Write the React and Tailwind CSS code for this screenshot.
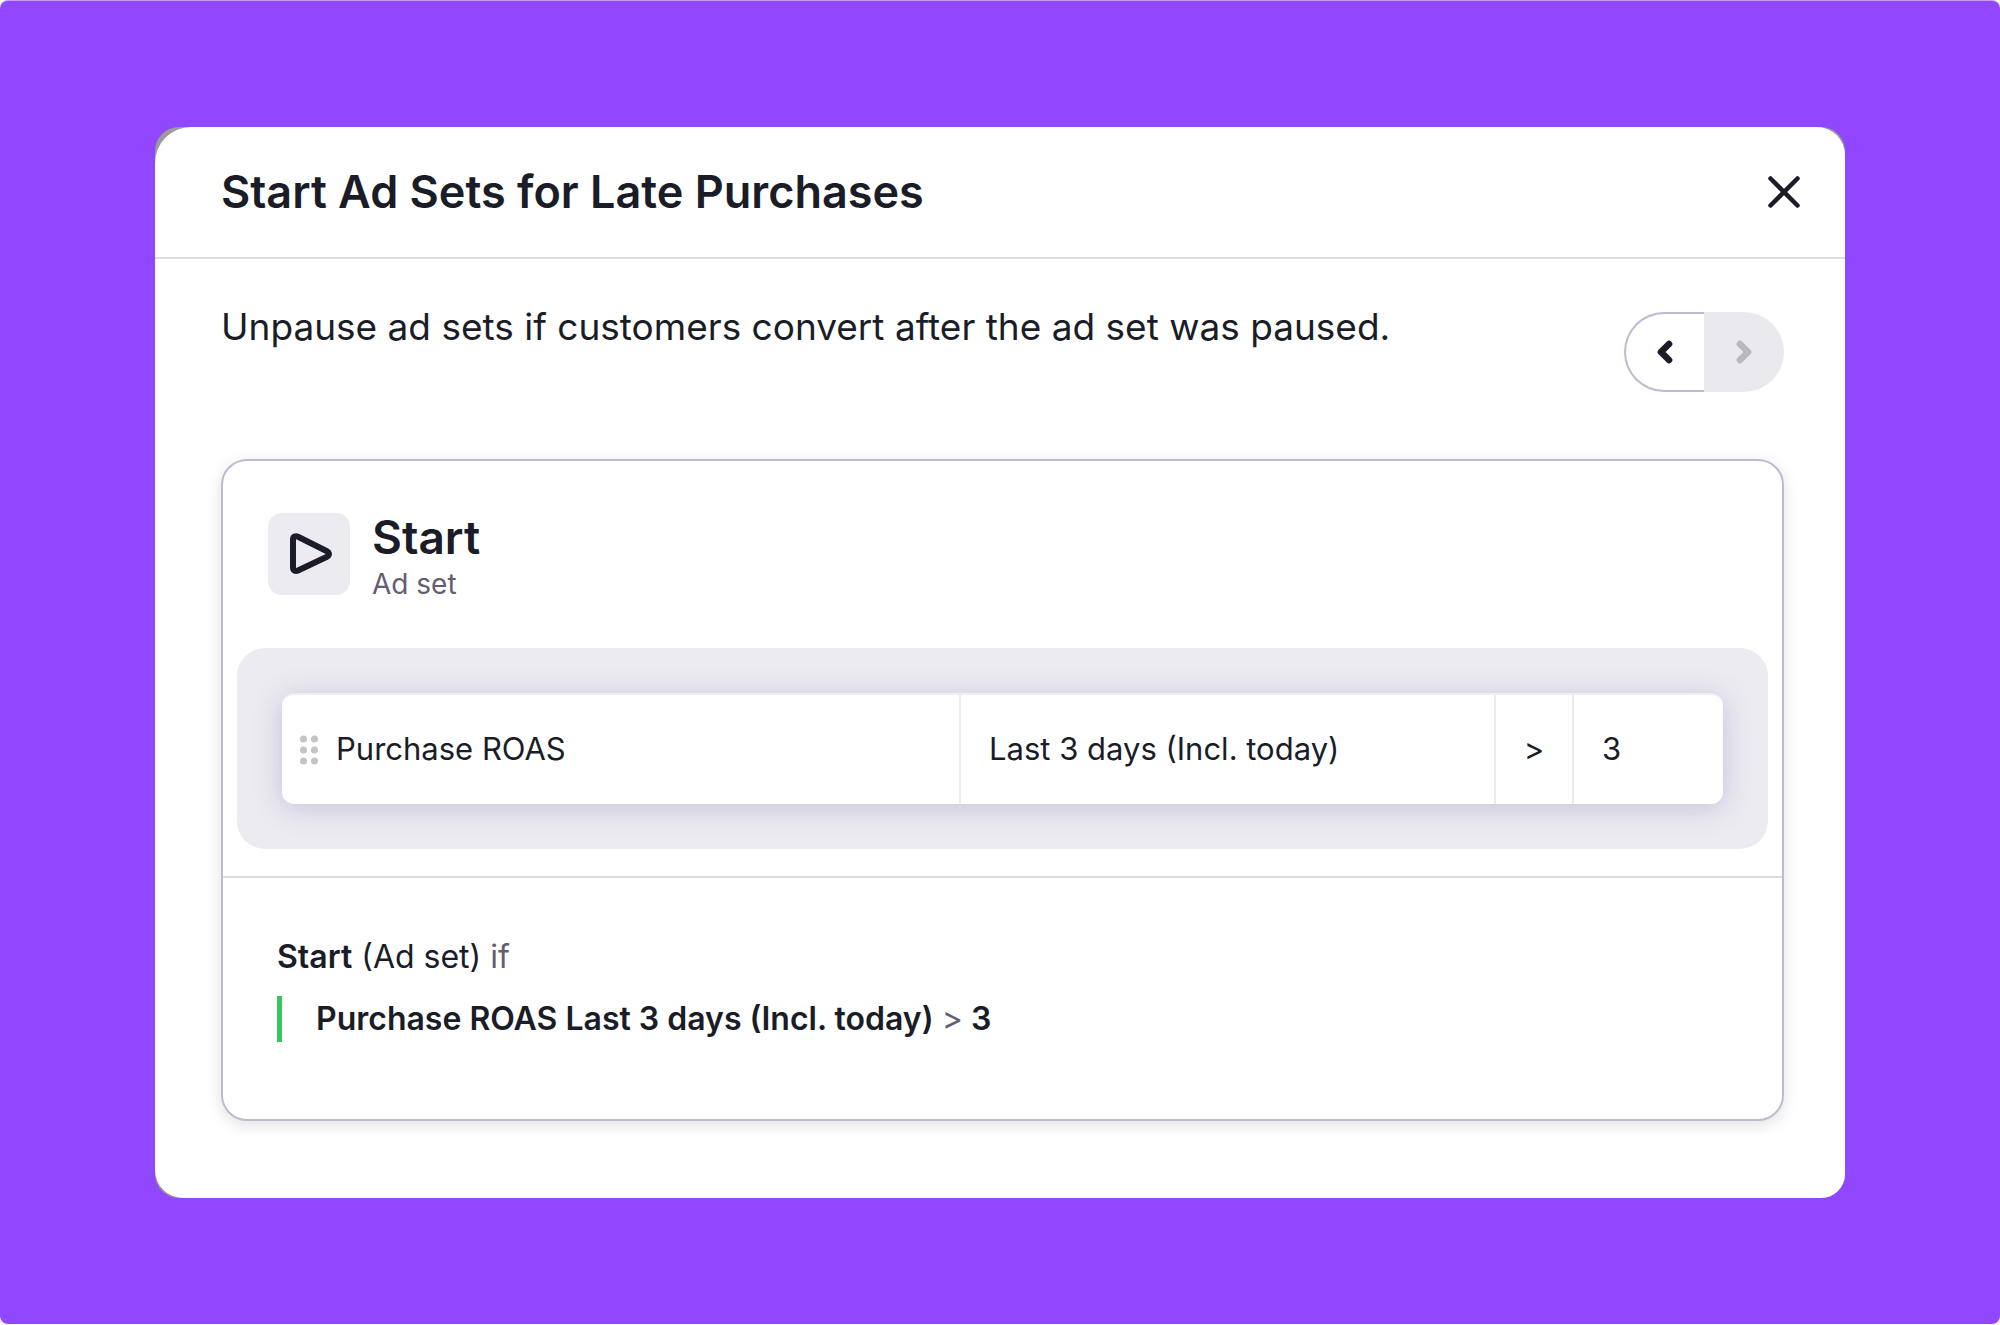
import { ChevronLeft, ChevronRight, X } from 'lucide-react'

const condition = {
  metric: 'Purchase ROAS',
  period: 'Last 3 days (Incl. today)',
  operator: '>',
  value: '3',
}

function PlayIcon() {
  return (
    <svg viewBox="0 0 82 82" className="size-full" fill="none" aria-hidden="true">
      <path
        d="M25 26.500C25 23.500 27.500 22.500 30 23.700L58.500 38C61.700 39.700 61.700 42.300 58.500 44L30 57.500C27.500 58.700 25 57.500 25 54.500Z"
        stroke="#1a1d28"
        strokeWidth="6"
        strokeLinejoin="round"
      />
    </svg>
  )
}

function DragHandle() {
  return (
    <svg viewBox="0 0 18 30" className="w-[18px] h-[30px] shrink-0" fill="#c4c4c4" aria-hidden="true">
      {[3.5, 14.5].map(x => [4, 15, 26].map(y => <circle key={`${x}-${y}`} cx={x} cy={y} r="3.500" />))}
    </svg>
  )
}

function Pager() {
  return (
    <div className="flex shrink-0">
      <button
        type="button"
        aria-label="Previous"
        className="size-20 flex items-center justify-center rounded-l-full border-2 border-r-0 border-[#bfbad0] text-[#1a1d28]"
      >
        <ChevronLeft className="size-8" strokeWidth={5} />
      </button>
      <button
        type="button"
        aria-label="Next"
        disabled
        className="size-20 flex items-center justify-center rounded-r-full bg-[#eae9ee] text-[#b9b9bd]"
      >
        <ChevronRight className="size-8" strokeWidth={5} />
      </button>
    </div>
  )
}

function ConditionRow({ metric, period, operator, value }) {
  return (
    <div className="rounded-[28px] bg-[#ecebf1] p-[45px]">
      <div className="grid grid-cols-[679fr_535fr_78fr_149fr] h-[111px] rounded-xl border-t-2 border-[#f0eff5] bg-white text-[31px] shadow-[0_4px_28px_rgba(100,85,150,0.28)] divide-x-2 divide-[#ecebf1]">
        <div className="flex items-center gap-[18px] pl-[18px]">
          <DragHandle />
          {metric}
        </div>
        <div className="flex items-center pl-7">{period}</div>
        <div className="flex items-center justify-center">{operator}</div>
        <div className="flex items-center pl-7">{value}</div>
      </div>
    </div>
  )
}

function Summary({ metric, period, operator, value }) {
  return (
    <div className="border-t-2 border-[#dcdae6] px-[54px] pt-14 pb-[77px] text-[32px] leading-[46px]">
      <p>
        <span className="font-semibold">Start</span> (Ad set) <span className="text-[#645c73]">if</span>
      </p>
      <p className="mt-4 border-l-[5px] border-[#34c759] pl-[34px] font-semibold">
        {metric} {period} <span className="font-normal text-[#645c73]">{operator}</span> {value}
      </p>
    </div>
  )
}

export default function App() {
  return (
    <div className="min-h-screen flex flex-col bg-white pb-px font-['Inter',sans-serif] text-[#1a1d28]">
      <main className="flex-1 rounded-lg border-t border-[#c49dff] bg-[#9146ff] px-[155px] pt-[126px] pb-[126px]">
        <div className="rounded-3xl bg-[#9b9b9b]">
          <section
            role="dialog"
            aria-labelledby="dialog-title"
            className="rounded-3xl rounded-tl-[36px] rounded-tr-[28px] rounded-bl-[28px] bg-white"
          >
            <header className="flex items-center justify-between border-b-2 border-[#dcdae6] h-[132px] pl-[66px] pr-[34px]">
              <h1 id="dialog-title" className="text-[45px] font-semibold">Start Ad Sets for Late Purchases</h1>
              <button type="button" aria-label="Close">
                <X className="size-[54px]" strokeWidth={2} />
              </button>
            </header>

            <div className="pl-[66px] pr-[61px] pt-[53px] pb-[77px]">
              <div className="flex items-start justify-between">
                <p className="text-[37px] leading-[30px]">
                  Unpause ad sets if customers convert after the ad set was paused.
                </p>
                <Pager />
              </div>

              <article className="mt-[67px] rounded-[26px] border-2 border-[#bfbad0] shadow-[0_4px_16px_rgba(0,0,0,0.12)]">
                <div className="flex items-start gap-[22px] px-[45px] pt-[52px] pb-[47px]">
                  <div className="size-[82px] rounded-[14px] bg-[#ecebf1]">
                    <PlayIcon />
                  </div>
                  <div>
                    <h2 className="text-[46px] leading-[48px] font-semibold">Start</h2>
                    <p className="mt-1.5 text-[28px] leading-[34px] text-[#645c73]">Ad set</p>
                  </div>
                </div>
                <div className="px-[14px] pb-[27px]">
                  <ConditionRow {...condition} />
                </div>
                <Summary {...condition} />
              </article>
            </div>
          </section>
        </div>
      </main>
    </div>
  )
}
